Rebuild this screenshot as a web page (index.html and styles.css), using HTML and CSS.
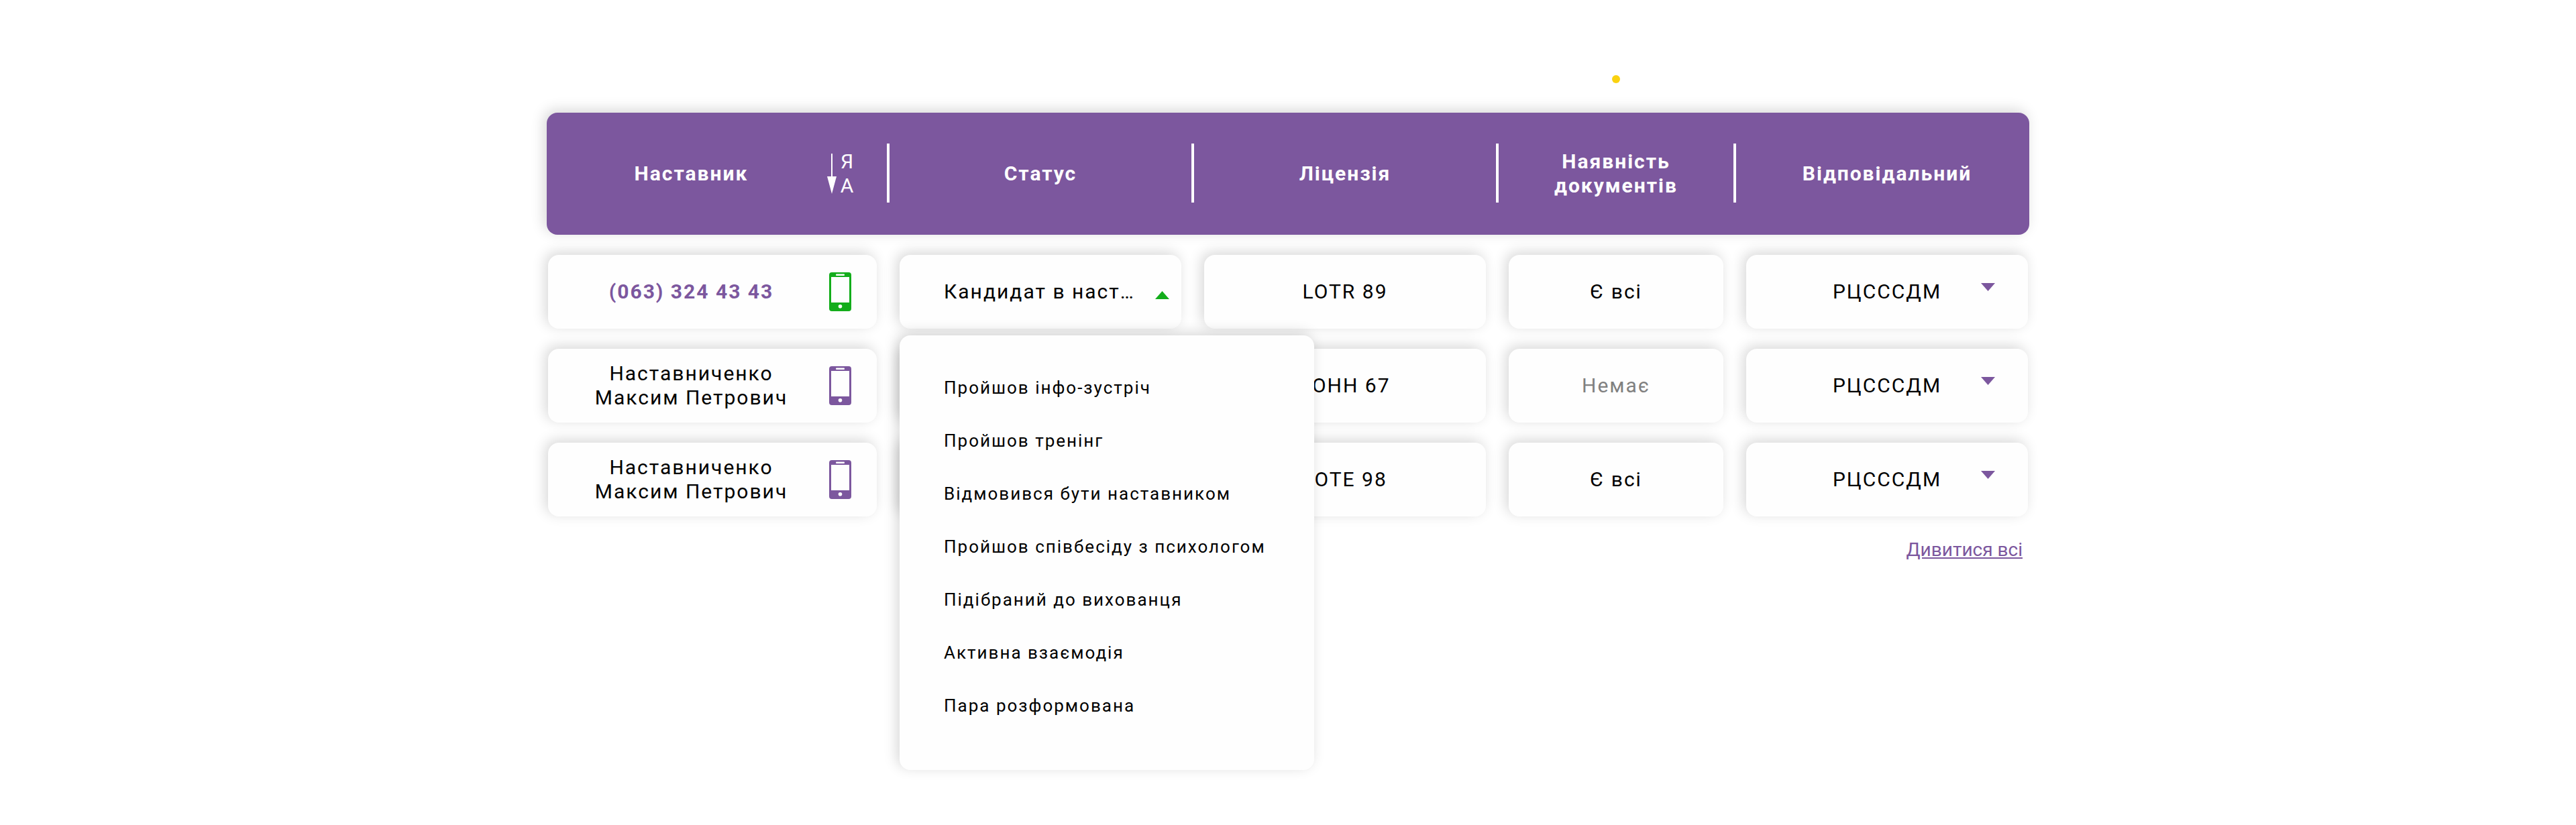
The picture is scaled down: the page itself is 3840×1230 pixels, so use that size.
FILE: index.html
```
<!DOCTYPE html>
<html lang="uk">
<head>
<meta charset="utf-8">
<meta name="viewport" content="width=device-width, initial-scale=1">
<title>Наставники</title>
<link rel="stylesheet" href="styles.css">
</head>
<body>
<svg class="sprite" aria-hidden="true">
  <symbol id="phone" viewBox="0 0 33 58">
    <path fill-rule="evenodd" d="M4 0h25a4 4 0 0 1 4 4v50a4 4 0 0 1-4 4H4a4 4 0 0 1-4-4V4a4 4 0 0 1 4-4zM3 7v38h27V7zM11 2.5a1 1 0 0 0-1 1v.5a1 1 0 0 0 1 1h11a1 1 0 0 0 1-1v-.5a1 1 0 0 0-1-1zM16.5 48a2.8 2.8 0 1 0 0 5.600a2.800 2.800 0 1 0 0-5.600z"/>
  </symbol>
  <symbol id="caret" viewBox="0 0 21 12"><path d="M0 0h21L10.500 12z"/></symbol>
</svg>
<main class="mentors">
  <table class="table">
    <thead class="table-head">
      <tr class="row row-head">
        <th class="head-cell mentor" scope="col">
          <span class="mentor-text">Наставник</span>
          <button class="sort" type="button" aria-label="Сортувати">
            <svg class="sort-arrow" viewBox="0 0 14 60" aria-hidden="true"><path d="M6 0h2v34h6L7 60 0 34h6z"/></svg>
            <span class="sort-letters"><span>Я</span><span>А</span></span>
          </button>
        </th>
        <th class="head-cell" scope="col">Статус</th>
        <th class="head-cell" scope="col">Ліцензія</th>
        <th class="head-cell marked" scope="col">Наявність документів</th>
        <th class="head-cell" scope="col">Відповідальний</th>
      </tr>
    </thead>
    <tbody class="table-body">
      <tr class="row">
        <td class="card mentor">
          <a class="mentor-text phone-number" href="tel:0633244343">(063) 324 43 43</a>
          <button class="phone active" type="button" aria-label="Сховати номер"><svg class="phone-icon" aria-hidden="true"><use href="#phone"/></svg></button>
        </td>
        <td class="card status">
          <button class="status-button" type="button" aria-haspopup="listbox" aria-expanded="true">
            <span class="status-text">Кандидат в наст…</span>
            <svg class="caret up" aria-hidden="true"><use href="#caret"/></svg>
          </button>
          <ul class="menu" role="listbox" aria-label="Статус">
            <li class="option" role="option">Пройшов інфо-зустріч</li>
            <li class="option" role="option">Пройшов тренінг</li>
            <li class="option" role="option">Відмовився бути наставником</li>
            <li class="option" role="option">Пройшов співбесіду з психологом</li>
            <li class="option" role="option">Підібраний до вихованця</li>
            <li class="option" role="option">Активна взаємодія</li>
            <li class="option" role="option">Пара розформована</li>
          </ul>
        </td>
        <td class="card">LOTR 89</td>
        <td class="card">Є всі</td>
        <td class="card owner">
          <select class="owner-select" aria-label="Відповідальний"><option>РЦСССДМ</option></select>
          <svg class="caret down" aria-hidden="true"><use href="#caret"/></svg>
        </td>
      </tr>
      <tr class="row">
        <td class="card mentor">
          <span class="mentor-text">Наставниченко Максим Петрович</span>
          <button class="phone" type="button" aria-label="Показати номер"><svg class="phone-icon" aria-hidden="true"><use href="#phone"/></svg></button>
        </td>
        <td class="card"></td>
        <td class="card">JOHH 67</td>
        <td class="card muted">Немає</td>
        <td class="card owner">
          <select class="owner-select" aria-label="Відповідальний"><option>РЦСССДМ</option></select>
          <svg class="caret down" aria-hidden="true"><use href="#caret"/></svg>
        </td>
      </tr>
      <tr class="row">
        <td class="card mentor">
          <span class="mentor-text">Наставниченко Максим Петрович</span>
          <button class="phone" type="button" aria-label="Показати номер"><svg class="phone-icon" aria-hidden="true"><use href="#phone"/></svg></button>
        </td>
        <td class="card"></td>
        <td class="card">LOTE 98</td>
        <td class="card">Є всі</td>
        <td class="card owner">
          <select class="owner-select" aria-label="Відповідальний"><option>РЦСССДМ</option></select>
          <svg class="caret down" aria-hidden="true"><use href="#caret"/></svg>
        </td>
      </tr>
    </tbody>
  </table>
  <a class="see-all" href="#all">Дивитися всі</a>
</main>
</body>
</html>
```
FILE: styles.css
```
:root {
  --purple: #7c579e;
  --green: #13ad1b;
  --yellow: #fad210;
  --surface: #fefefe;
  --shadow: -4px -4px 20px rgba(0, 0, 0, 0.16);
}

* { box-sizing: border-box; }

body {
  margin: 0;
  background: #fff;
  color: #000;
  font: 400 30px/36px Roboto, "Liberation Sans", sans-serif;
}

button, select {
  margin: 0;
  padding: 0;
  border: 0;
  background: none;
  color: inherit;
  font: inherit;
  letter-spacing: inherit;
  cursor: pointer;
}

.sprite {
  position: absolute;
  width: 0;
  height: 0;
}

/* The bottom padding leaves room for an open status menu. */
.mentors {
  display: flex;
  flex-direction: column;
  max-width: 2210px;
  min-height: 100vh;
  margin: 0 auto;
  padding: 168px 0 392px;
}

.table {
  display: flex;
  flex-direction: column;
  gap: 30px;
  letter-spacing: 2px;
}

.table-head { display: block; }

.table-body {
  display: flex;
  flex-direction: column;
  gap: 30px;
}

.row {
  display: grid;
  grid-template-columns: 490fr 420fr 420fr 320fr 420fr;
  gap: 34px;
  padding: 0 2px;
}

.row-head {
  min-height: 182px;
  border-radius: 16px;
  background: var(--purple);
  box-shadow: var(--shadow);
  color: #fff;
}

.head-cell, .card {
  position: relative;
  display: flex;
  align-items: center;
  justify-content: center;
  padding: 0 24px;
  text-align: center;
}

.head-cell { font-weight: 700; }

.head-cell:not(:last-child)::after {
  content: "";
  position: absolute;
  top: 46px;
  right: -19px;
  width: 4px;
  height: 88px;
  background: #fff;
}

.marked::before {
  content: "";
  position: absolute;
  top: -56px;
  width: 12px;
  height: 12px;
  border-radius: 50%;
  background: var(--yellow);
}

.card {
  min-height: 110px;
  border-radius: 16px;
  background: var(--surface);
  box-shadow: var(--shadow);
}

.muted { color: #808080; }

.head-cell.mentor, .card.mentor { padding: 0 38px 0 8px; }

.mentor-text {
  flex: 1;
  padding: 0 48px;
}

.phone-number {
  color: var(--purple);
  font-weight: 700;
  text-decoration: none;
}

.phone {
  display: flex;
  color: var(--purple);
}

.phone.active { color: var(--green); }

.phone-icon {
  width: 33px;
  height: 58px;
  fill: currentColor;
}

.sort {
  display: flex;
  align-items: center;
  justify-content: center;
  gap: 6px;
  width: 33px;
  font-weight: 400;
  letter-spacing: 0;
}

.sort-arrow {
  flex: none;
  width: 14px;
  height: 60px;
  fill: currentColor;
}

.sort-letters {
  display: flex;
  flex-direction: column;
}

.card.status, .card.owner { padding: 0; }

.status-button {
  display: flex;
  align-items: center;
  justify-content: space-between;
  width: 100%;
  height: 110px;
  padding: 0 18px 0 66px;
  white-space: nowrap;
}

.caret {
  width: 21px;
  height: 12px;
}

.caret.up {
  margin-top: 10px;
  fill: var(--green);
  transform: rotate(180deg);
}

.caret.down {
  position: absolute;
  top: 42px;
  right: 49px;
  fill: var(--purple);
  pointer-events: none;
}

.owner-select {
  width: 100%;
  height: 110px;
  appearance: none;
  text-align: center;
}

.menu {
  position: absolute;
  z-index: 1;
  top: 120px;
  left: 0;
  width: 618px;
  margin: 0;
  padding: 39px 32px 56px 66px;
  border-radius: 16px;
  background: var(--surface);
  box-shadow: var(--shadow);
  font-size: 26px;
  line-height: 79px;
  list-style: none;
  text-align: left;
  white-space: nowrap;
}

.see-all {
  align-self: flex-end;
  margin: 32px 10px 0 0;
  color: var(--purple);
  font-size: 28px;
}
```
